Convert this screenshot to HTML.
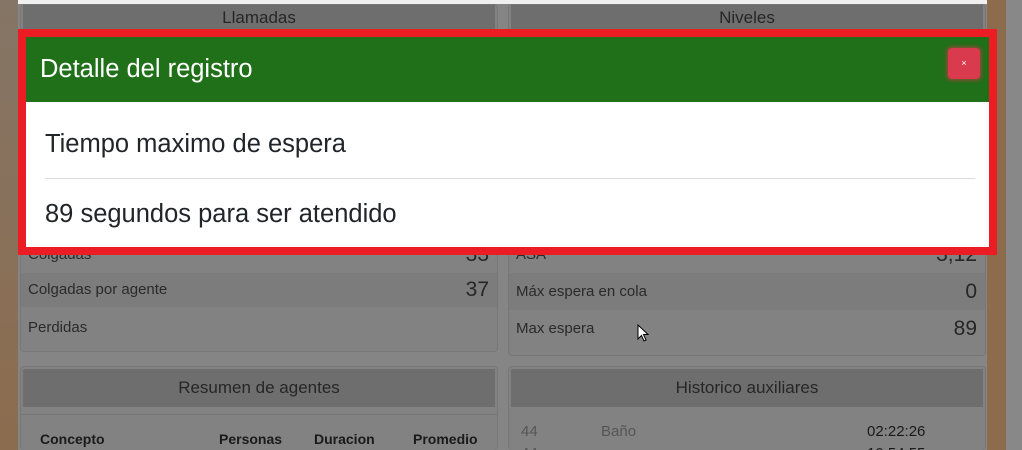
<!DOCTYPE html>
<html><head><meta charset="utf-8"><style>
*{box-sizing:border-box;margin:0;padding:0}
html,body{width:1022px;height:450px;overflow:hidden}
body{position:relative;background:#858585;font-family:"Liberation Sans",sans-serif;}
.abs{position:absolute}
.left{left:0;top:0;width:18px;height:450px;background:linear-gradient(#857566,#8c6c4e)}
.rstrip{left:987px;top:0;width:19px;height:450px;background:#8d6c4e}
.scroll{left:1006px;top:0;width:16px;height:450px;background:#888}
.top{left:0;top:0;width:1022px;height:4px;background:#f0f0f0}
.panel{background:#828282;border:1px solid #777;border-radius:4px}
.hdr{background:#6e6e6e;color:#262626;text-align:center;font-size:17px}
.row{position:absolute;left:0;right:0;font-size:15px;color:#2a2a2a;padding-left:7px}
.row b{position:absolute;right:8px;font-weight:normal;font-size:21px;color:#262626}
.dk{background:#7c7c7c}
</style></head><body>
<div class="abs top"></div>
<div class="abs left"></div>
<div class="abs rstrip"></div>
<div class="abs scroll"></div>

<div class="abs panel" style="left:20px;top:4px;width:478px;height:348px">
 <div class="hdr" style="position:absolute;left:2px;right:2px;top:0;height:26px;line-height:26px">Llamadas</div>
 <div class="row" style="top:232px;height:36px;line-height:36px">Colgadas<b>33</b></div>
 <div class="row dk" style="top:268px;height:34px;line-height:34px">Colgadas por agente<b>37</b></div>
 <div class="row" style="top:303px;height:40px;line-height:40px">Perdidas</div>
</div>
<div class="abs panel" style="left:508px;top:4px;width:478px;height:352px">
 <div class="hdr" style="position:absolute;left:2px;right:2px;top:0;height:26px;line-height:26px">Niveles</div>
 <div class="row" style="top:232px;height:36px;line-height:36px">ASA<b>3,12</b></div>
 <div class="row dk" style="top:268px;height:37px;line-height:37px">Máx espera en cola<b>0</b></div>
 <div class="row" style="top:304px;height:40px;line-height:40px">Max espera<b>89</b></div>
</div>
<div class="abs panel" style="left:20px;top:366px;width:478px;height:84px;border-bottom:none">
 <div class="hdr" style="position:absolute;left:2px;right:2px;top:2px;height:38px;line-height:38px">Resumen de agentes</div>
 <div style="position:absolute;left:0;right:0;top:47px;height:1px;background:#777"></div>
 <div style="position:absolute;top:64px;left:19px;font-size:14px;font-weight:bold;color:#1a1a1a">Concepto</div>
 <div style="position:absolute;top:64px;left:198px;font-size:14px;font-weight:bold;color:#1a1a1a">Personas</div>
 <div style="position:absolute;top:64px;left:293px;font-size:14px;font-weight:bold;color:#1a1a1a">Duracion</div>
 <div style="position:absolute;top:64px;left:392px;font-size:14px;font-weight:bold;color:#1a1a1a">Promedio</div>
</div>
<div class="abs panel" style="left:508px;top:366px;width:478px;height:84px;border-bottom:none">
 <div class="hdr" style="position:absolute;left:2px;right:2px;top:2px;height:38px;line-height:38px">Historico auxiliares</div>
 <div style="position:absolute;top:56px;left:12px;font-size:15px;color:#555">44</div>
 <div style="position:absolute;top:56px;left:92px;font-size:15px;color:#555">Baño</div>
 <div style="position:absolute;top:56px;left:358px;font-size:15px;color:#1a1a1a">02:22:26</div>
 <div style="position:absolute;top:78px;left:12px;font-size:15px;color:#555">44</div>
 <div style="position:absolute;top:78px;left:358px;font-size:15px;color:#1a1a1a">10:54:55</div>
</div>
<svg class="abs" style="left:637px;top:324px" width="12" height="19" viewBox="0 0 12 19"><path d="M1 1 L1 15 L4.5 11.5 L7 17 L9 16 L6.5 10.5 L11 10.5 Z" fill="#fff" stroke="#000" stroke-width="1"/></svg>

<div class="abs" style="left:18px;top:29px;width:979px;height:226px;border:8px solid #ec1c24;background:#fff">
 <div style="height:65px;background:#1f7019;position:relative">
  <div style="position:absolute;left:14px;top:18px;font-size:25.5px;color:#fff">Detalle del registro</div>
  <div style="position:absolute;left:922px;top:11px;width:32px;height:31px;background:#d93a4e;border-radius:4px;box-shadow:0 0 3px 2px rgba(220,53,69,.5);color:#fff;font-size:9px;text-align:center;line-height:31px">×</div>
 </div>
 <div style="position:absolute;left:19px;top:93px;font-size:25.5px;color:#212529">Tiempo maximo de espera</div>
 <div style="position:absolute;left:19px;right:14px;top:141px;height:1px;background:#dcdcdc"></div>
 <div style="position:absolute;left:19px;top:163px;font-size:25.5px;color:#212529">89 segundos para ser atendido</div>
</div>
</body></html>
